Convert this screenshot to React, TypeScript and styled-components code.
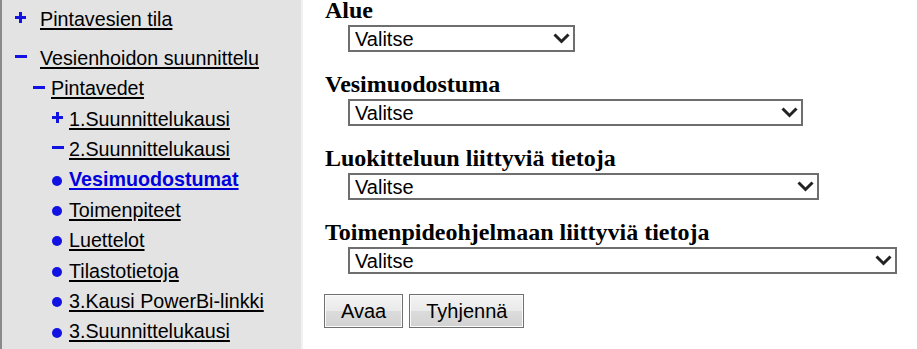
import React from "react";
import styled, { createGlobalStyle } from "styled-components";

type MarkerKind = "plus" | "minus" | "dot";
type Level = 1 | 2 | 3;

type NavItem = {
    label: string;
    marker: MarkerKind;
    level: Level;
    active?: boolean;
};

const NAV: NavItem[] = [
    { label: "Pintavesien tila", marker: "plus", level: 1 },
    { label: "Vesienhoidon suunnittelu", marker: "minus", level: 1 },
    { label: "Pintavedet", marker: "minus", level: 2 },
    { label: "1.Suunnittelukausi", marker: "plus", level: 3 },
    { label: "2.Suunnittelukausi", marker: "minus", level: 3 },
    { label: "Vesimuodostumat", marker: "dot", level: 3, active: true },
    { label: "Toimenpiteet", marker: "dot", level: 3 },
    { label: "Luettelot", marker: "dot", level: 3 },
    { label: "Tilastotietoja", marker: "dot", level: 3 },
    { label: "3.Kausi PowerBi-linkki", marker: "dot", level: 3 },
    { label: "3.Suunnittelukausi", marker: "dot", level: 3 },
];

const FIELDS = [
    { label: "Alue", width: 227 },
    { label: "Vesimuodostuma", width: 455 },
    { label: "Luokitteluun liittyviä tietoja", width: 471 },
    { label: "Toimenpideohjelmaan liittyviä tietoja", width: 549 },
];

// padding-left and marker box width for each level of the tree
const INDENT = { 1: 13, 2: 31, 3: 50 };
const MARKER_BOX = { 1: 25, 2: 18, 3: 17 };

const BLUE = "#1212e2";

const GlobalStyle = createGlobalStyle`
    html, body {
        margin: 0;
        padding: 0;
        background: #ffffff;
    }
    body {
        font-family: "Liberation Sans", Arial, sans-serif;
    }
`;

const Marker = ({ kind }: { kind: MarkerKind }) => {
    if (kind === "plus") {
        return (
            <MarkerIcon width="11" height="11" viewBox="0 0 11 11" $shift={-1.7}>
                <path d="M0 5.5H11M5.5 0V11" stroke={BLUE} strokeWidth="3" />
            </MarkerIcon>
        );
    }
    if (kind === "minus") {
        return (
            <MarkerIcon width="12" height="3" viewBox="0 0 12 3" $shift={-1.2}>
                <rect x="0" y="0" width="12" height="3" fill={BLUE} />
            </MarkerIcon>
        );
    }
    return (
        <MarkerIcon width="10" height="10" viewBox="0 0 10 10" $shift={1.1}>
            <circle cx="5" cy="5" r="5" fill={BLUE} />
        </MarkerIcon>
    );
};

const Chevron = () => (
    <ChevronIcon width="17" height="11" viewBox="0 0 17 11">
        <path d="M1.5 1.5L8.5 8.5L15.5 1.5" fill="none" stroke="#222" strokeWidth="3" />
    </ChevronIcon>
);

const App: React.FC = () => {
    return (
        <>
            <GlobalStyle />
            <Page>
                <Sidebar>
                    {NAV.map((item) => (
                        <NavRow key={item.label} $level={item.level}>
                            <MarkerBox $level={item.level}>
                                <Marker kind={item.marker} />
                            </MarkerBox>
                            <NavLink href="#" $active={item.active}>
                                {item.label}
                            </NavLink>
                        </NavRow>
                    ))}
                </Sidebar>
                <Main>
                    <FieldList>
                        {FIELDS.map((f) => (
                            <Field key={f.label}>
                                <FieldLabel>{f.label}</FieldLabel>
                                <SelectWrap $width={f.width}>
                                    <Select defaultValue="">
                                        <option value="">Valitse</option>
                                    </Select>
                                    <Chevron />
                                </SelectWrap>
                            </Field>
                        ))}
                    </FieldList>
                    <ButtonRow>
                        <Button type="button">Avaa</Button>
                        <Button type="button">Tyhjennä</Button>
                    </ButtonRow>
                </Main>
            </Page>
        </>
    );
};

export default App;

const Page = styled.div`
    display: flex;
    height: 349px;
    overflow: hidden;
`;

const Sidebar = styled.nav`
    box-sizing: border-box;
    width: 303px;
    flex-shrink: 0;
    padding-top: 4px;
    background: #e3e3e3;
    border-left: 2px solid #8a8a8a;
    border-right: 2px solid #f1f1f1;
`;

const NavRow = styled.div<{ $level: Level }>`
    display: flex;
    align-items: center;
    height: 30.4px;
    padding-left: ${(p) => INDENT[p.$level]}px;
    &:first-child {
        margin-bottom: 8.4px;
    }
`;

const MarkerBox = styled.span<{ $level: Level }>`
    display: flex;
    align-items: center;
    width: ${(p) => MARKER_BOX[p.$level]}px;
    flex-shrink: 0;
`;

const MarkerIcon = styled.svg<{ $shift: number }>`
    display: block;
    margin-top: ${(p) => (p.$shift > 0 ? p.$shift * 2 : 0)}px;
    margin-bottom: ${(p) => (p.$shift < 0 ? -p.$shift * 2 : 0)}px;
`;

const NavLink = styled.a<{ $active?: boolean }>`
    font-size: 19.7px;
    line-height: 30.4px;
    white-space: nowrap;
    color: ${(p) => (p.$active ? "#0000dd" : "#000")};
    font-weight: ${(p) => (p.$active ? "bold" : "normal")};
    text-decoration: underline;
    text-decoration-thickness: 2px;
    text-underline-offset: 2px;
`;

const Main = styled.main`
    flex: 1;
    padding-left: 22px;
`;

const FieldList = styled.div`
    display: flex;
    flex-direction: column;
    gap: 22px;
`;

const Field = styled.div`
    display: flex;
    flex-direction: column;
`;

const FieldLabel = styled.div`
    font-family: "Liberation Serif", "Times New Roman", serif;
    font-weight: bold;
    font-size: 24px;
    line-height: 20px;
    color: #000;
    white-space: nowrap;
`;

const SelectWrap = styled.div<{ $width: number }>`
    position: relative;
    width: ${(p) => p.$width}px;
    margin: 5px 0 0 23px;
`;

const Select = styled.select`
    appearance: none;
    -webkit-appearance: none;
    display: block;
    box-sizing: border-box;
    width: 100%;
    height: 27px;
    margin: 0;
    padding: 0 0 0 5px;
    border: 2px solid #6e6e6e;
    border-radius: 0;
    background: #fff;
    color: #000;
    font-family: "Liberation Sans", Arial, sans-serif;
    font-size: 20px;
    outline: none;
`;

const ChevronIcon = styled.svg`
    position: absolute;
    right: 5px;
    top: 8px;
    pointer-events: none;
`;

const ButtonRow = styled.div`
    display: flex;
    gap: 6px;
    margin: 20px 0 0 -1px;
`;

const Button = styled.button`
    box-sizing: border-box;
    height: 34px;
    padding: 0 16px;
    border: 1px solid #707070;
    border-radius: 0;
    box-shadow: inset 0 0 0 1px #fafafa;
    background: linear-gradient(#f4f4f4, #e9e9e9 50%, #dcdcdc 50%, #d2d2d2);
    color: #000;
    font-family: "Liberation Sans", Arial, sans-serif;
    font-size: 20px;
    cursor: pointer;
`;
